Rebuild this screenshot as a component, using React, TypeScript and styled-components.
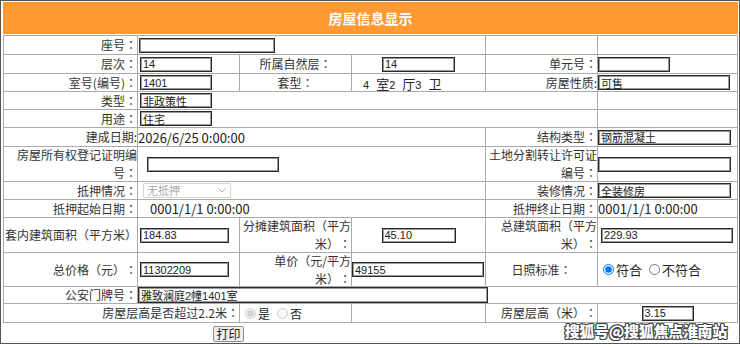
import React from 'react';
import styled, { createGlobalStyle } from 'styled-components';

const GlobalStyle = createGlobalStyle`
  html, body { margin: 0; padding: 0; background: #fff; }
  body {
    font-family: "Noto Sans CJK SC", "Microsoft YaHei", sans-serif;
    font-size: 12px;
    color: #333;
    text-spacing-trim: space-all;
  }
`;

const Frame = styled.div`
  position: relative;
  width: 740px;
  box-sizing: border-box;
  border: 1px solid #555;
  padding: 1px 1px 1px 2px;
`;

const Header = styled.div`
  height: 32px;
  margin-bottom: 1px;
  background: #ff9a33;
  color: #fff;
  font-weight: bold;
  font-size: 14px;
  display: flex;
  align-items: center;
  justify-content: center;
`;

const Grid = styled.div`
  display: grid;
  grid-template-columns: 133px 101px 111px 133px 111px 139px;
  grid-template-rows: 18px 18px 17px 17px 17px 18px 34px 17px 17px 34px 33px 16px 18px;
  gap: 1px;
  background: #aaa;
  border: 1px solid #aaa;
`;

type Align = 'left' | 'center' | 'right';

const Cell = styled.div<{ $span?: number; $align?: Align; $pl?: number; $bottom?: boolean }>`
  grid-column: span ${(p) => p.$span ?? 1};
  background: #fff;
  display: flex;
  align-items: ${(p) => (p.$bottom ? 'flex-end' : 'center')};
  justify-content: ${(p) =>
    p.$align === 'right' ? 'flex-end' : p.$align === 'center' ? 'center' : 'flex-start'};
  text-align: ${(p) => p.$align ?? 'left'};
  padding-left: ${(p) => p.$pl ?? 0}px;
  min-width: 0;
  line-height: 17px;
`;

/* full-width colon drawn centred, as in the original page font */
const Colon = styled.span`
  font-family: "Noto Sans CJK TC", "Noto Sans CJK SC", sans-serif;
  text-spacing-trim: space-all;
`;

const LabelText = styled.span`
  color: #333;
  line-height: 17.6px;
  text-spacing-trim: space-all;
`;

const Label = ({ text }: { text: string }) => {
  const parts = text.split('：');
  return (
    <LabelText>
      {parts.map((part, i) => (
        <React.Fragment key={i}>
          {part.split('\n').map((line, j) => (
            <React.Fragment key={j}>
              {j > 0 && <br />}
              {line}
            </React.Fragment>
          ))}
          {i < parts.length - 1 && <Colon>：</Colon>}
        </React.Fragment>
      ))}
    </LabelText>
  );
};

const Field = styled.input<{ $w: number; $h?: number }>`
  box-sizing: border-box;
  width: ${(p) => p.$w}px;
  height: ${(p) => p.$h ?? 15}px;
  margin: 0;
  padding: 0 2px;
  border: 1px solid #2a2a2a;
  box-shadow: inset 0 0 0 1px #9a9a9a;
  background: #fff;
  color: #222;
  font-family: "Liberation Sans", "Noto Sans CJK SC", sans-serif;
  font-size: 11px;
  outline: none;
`;

const Value = styled.span<{ $size?: number }>`
  font-size: ${(p) => p.$size ?? 13}px;
  color: #222;
  white-space: nowrap;
`;

const Num = styled.span`
  font-size: 11px;
  font-family: "Liberation Sans", sans-serif;
  color: #222;
`;

const Unit = styled.span`
  font-size: 13px;
  color: #222;
  margin-left: 7px;
`;

const RoomLine = styled.span`
  display: flex;
  align-items: baseline;
  margin-bottom: -3px;
`;

const FakeSelect = styled.div`
  box-sizing: border-box;
  width: 88px;
  height: 15px;
  border: 1px solid #d4d4d4;
  border-radius: 1px;
  color: #aaa;
  font-size: 11px;
  line-height: 13px;
  padding: 0 4px 0 3px;
  display: flex;
  align-items: center;
  justify-content: space-between;
`;

const RadioGroup = styled.div<{ $size?: number }>`
  display: flex;
  align-items: center;
  font-size: ${(p) => p.$size ?? 13}px;
  color: #222;
`;

const RadioLabel = styled.label`
  display: flex;
  align-items: center;
  margin-right: 2px;
`;

const Radio = styled.input`
  width: 11px;
  height: 11px;
  margin: 0 2px 0 5px;
`;

const Footer = styled.div`
  height: 19px;
  box-sizing: border-box;
  padding: 3px 0 0 210px;
  display: flex;
  align-items: flex-start;
`;

const PrintButton = styled.button`
  box-sizing: border-box;
  width: 31px;
  height: 16px;
  padding: 0;
  border: 1px solid #8f8f8f;
  border-radius: 2px;
  background: #efefef;
  color: #222;
  font-family: "Noto Sans CJK SC", sans-serif;
  font-size: 12px;
  line-height: 14px;
`;

const Watermark = styled.div`
  position: absolute;
  top: 321px;
  right: 12px;
  font-size: 15px;
  font-weight: 900;
  line-height: 18px;
  color: #fff;
  letter-spacing: -0.3px;
  text-shadow: 1px 1px 0 #444, -1px -1px 0 #444, 1px -1px 0 #444, -1px 1px 0 #444,
    0 1px 0 #444, 0 -1px 0 #444, 1px 0 0 #444, -1px 0 0 #444;
`;

const Chevron = () => (
  <svg width="8" height="5" viewBox="0 0 8 5" fill="none">
    <path d="M0.5 0.5 L4 4 L7.5 0.5" stroke="#aaa" strokeWidth="1" />
  </svg>
);

export default function App() {
  return (
    <>
      <GlobalStyle />
      <Frame>
        <Header>房屋信息显示</Header>
        <Grid>
          {/* row 1 */}
          <Cell $align="right"><Label text="座号：" /></Cell>
          <Cell $span={3} $pl={1}>
            <Field $w={136} readOnly value="" />
          </Cell>
          <Cell />
          <Cell />

          {/* row 2 */}
          <Cell $align="right"><Label text="层次：" /></Cell>
          <Cell $pl={2}>
            <Field $w={72} readOnly value="14" />
          </Cell>
          <Cell $align="center"><Label text="所属自然层：" /></Cell>
          <Cell $align="center">
            <Field $w={73} readOnly value="14" />
          </Cell>
          <Cell $align="right"><Label text="单元号：" /></Cell>
          <Cell>
            <Field $w={72} readOnly value="" />
          </Cell>

          {/* row 3 */}
          <Cell $align="right"><Label text="室号(编号)：" /></Cell>
          <Cell $pl={2}>
            <Field $w={72} readOnly value="1401" />
          </Cell>
          <Cell $align="center"><Label text="套型：" /></Cell>
          <Cell $pl={11} $bottom>
            <RoomLine>
              <Num>4</Num>
              <Unit>室</Unit>
              <Num>2</Num>
              <Unit>厅</Unit>
              <Num>3</Num>
              <Unit>卫</Unit>
            </RoomLine>
          </Cell>
          <Cell $align="right"><Label text="房屋性质:" /></Cell>
          <Cell>
            <Field $w={132} readOnly value="可售" />
          </Cell>

          {/* row 4 */}
          <Cell $align="right"><Label text="类型：" /></Cell>
          <Cell $span={4} $pl={2}>
            <Field $w={72} readOnly value="非政策性" />
          </Cell>
          <Cell />

          {/* row 5 */}
          <Cell $align="right"><Label text="用途：" /></Cell>
          <Cell $span={4} $pl={2}>
            <Field $w={72} readOnly value="住宅" />
          </Cell>
          <Cell />

          {/* row 6 */}
          <Cell $align="right"><Label text="建成日期:" /></Cell>
          <Cell $span={3}>
            <Value>2026/6/25 0:00:00</Value>
          </Cell>
          <Cell $align="right"><Label text="结构类型：" /></Cell>
          <Cell>
            <Field $w={133} readOnly value="钢筋混凝土" />
          </Cell>

          {/* row 7 */}
          <Cell $align="right"><Label text={'房屋所有权登记证明编\n号：'} /></Cell>
          <Cell $span={3} $pl={9}>
            <Field $w={132} readOnly value="" />
          </Cell>
          <Cell $align="right"><Label text={'土地分割转让许可证\n编号：'} /></Cell>
          <Cell>
            <Field $w={133} readOnly value="" />
          </Cell>

          {/* row 8 */}
          <Cell $align="right"><Label text="抵押情况：" /></Cell>
          <Cell $span={3} $pl={5}>
            <FakeSelect aria-disabled="true">
              <span>无抵押</span>
              <Chevron />
            </FakeSelect>
          </Cell>
          <Cell $align="right"><Label text="装修情况：" /></Cell>
          <Cell>
            <Field $w={133} readOnly value="全装修房" />
          </Cell>

          {/* row 9 */}
          <Cell $align="right"><Label text="抵押起始日期：" /></Cell>
          <Cell $span={3} $pl={12}>
            <Value>0001/1/1 0:00:00</Value>
          </Cell>
          <Cell $align="right"><Label text="抵押终止日期：" /></Cell>
          <Cell>
            <Value>0001/1/1 0:00:00</Value>
          </Cell>

          {/* row 10 */}
          <Cell $align="right"><Label text="套内建筑面积（平方米）" /></Cell>
          <Cell $pl={2}>
            <Field $w={89} readOnly value="184.83" />
          </Cell>
          <Cell $align="right"><Label text={'分摊建筑面积（平方\n米）：'} /></Cell>
          <Cell $align="center">
            <Field $w={74} readOnly value="45.10" />
          </Cell>
          <Cell $align="right"><Label text={'总建筑面积（平方\n米）：'} /></Cell>
          <Cell $pl={3}>
            <Field $w={132} readOnly value="229.93" />
          </Cell>

          {/* row 11 */}
          <Cell $align="right"><Label text="总价格（元）：" /></Cell>
          <Cell $pl={2}>
            <Field $w={89} readOnly value="11302209" />
          </Cell>
          <Cell $align="right"><Label text={'单价（元/平方\n米）：'} /></Cell>
          <Cell>
            <Field $w={132} readOnly value="49155" />
          </Cell>
          <Cell $align="center"><Label text="日照标准：" /></Cell>
          <Cell>
            <RadioGroup>
              <RadioLabel>
                <Radio type="radio" name="sun" defaultChecked />
                符合
              </RadioLabel>
              <RadioLabel>
                <Radio type="radio" name="sun" />
                不符合
              </RadioLabel>
            </RadioGroup>
          </Cell>

          {/* row 12 */}
          <Cell $align="right"><Label text="公安门牌号：" /></Cell>
          <Cell $span={5}>
            <Field $w={350} $h={16} readOnly value="雅致澜庭2幢1401室" />
          </Cell>

          {/* row 13 */}
          <Cell $span={2} $align="right"><Label text="房屋层高是否超过2.2米：" /></Cell>
          <Cell>
            <RadioGroup $size={12}>
              <RadioLabel>
                <Radio type="radio" name="height" defaultChecked disabled />
                是
              </RadioLabel>
              <RadioLabel>
                <Radio type="radio" name="height" disabled />
                否
              </RadioLabel>
            </RadioGroup>
          </Cell>
          <Cell />
          <Cell $align="right"><Label text="房屋层高（米）：" /></Cell>
          <Cell $align="center">
            <Field $w={52} readOnly value="3.15" />
          </Cell>
        </Grid>
        <Footer>
          <PrintButton type="button">打印</PrintButton>
        </Footer>
        <Watermark>搜狐号@搜狐焦点淮南站</Watermark>
      </Frame>
    </>
  );
}
